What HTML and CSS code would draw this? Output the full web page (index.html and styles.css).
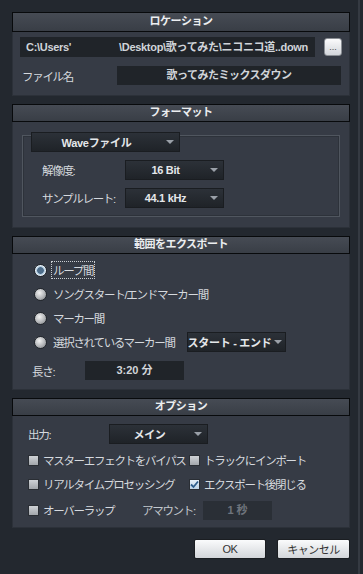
FILE: index.html
```html
<!DOCTYPE html>
<html lang="ja">
<head>
    <meta charset="utf-8" />
    <title>ミックスダウンをエクスポート</title>
    <link rel="stylesheet" href="styles.css">
</head>
<body>
<div class="dialog">

    <section class="group">
        <h3 class="group-head first">ロケーション</h3>
        <div class="group-body loc">
            <div class="row">
                <div class="field path"><span class="path-head">C:\Users'</span><span>\Desktop\歌ってみた\ニコニコ道..down</span></div>
                <button type="button" class="browse">...</button>
            </div>
            <div class="row">
                <span class="label name-label">ファイル名</span>
                <div class="field name">歌ってみたミックスダウン</div>
            </div>
        </div>
    </section>

    <section class="group">
        <h3 class="group-head">フォーマット</h3>
        <div class="group-body fmt">
            <div class="inner-box">
                <div class="drop wide"><span class="drop-text">Waveファイル</span><span class="arrow"></span></div>
                <div class="row fmt-row">
                    <span class="label fmt-label">解像度:</span>
                    <div class="drop"><span class="drop-text">16 Bit</span><span class="arrow"></span></div>
                </div>
                <div class="row fmt-row">
                    <span class="label fmt-label">サンプルレート:</span>
                    <div class="drop"><span class="drop-text">44.1 kHz</span><span class="arrow"></span></div>
                </div>
            </div>
        </div>
    </section>

    <section class="group">
        <h3 class="group-head">範囲をエクスポート</h3>
        <div class="group-body range">
            <div class="row radio-row"><span class="radio on"></span><span class="label focus">ループ間</span></div>
            <div class="row radio-row"><span class="radio"></span><span class="label">ソングスタート/エンドマーカー間</span></div>
            <div class="row radio-row"><span class="radio"></span><span class="label">マーカー間</span></div>
            <div class="row radio-row">
                <span class="radio"></span><span class="label">選択されているマーカー間</span>
                <div class="drop marker"><span class="drop-text">スタート - エンド</span><span class="arrow"></span></div>
            </div>
            <div class="row length-row">
                <span class="label length-label">長さ:</span>
                <div class="field value">3:20 分</div>
            </div>
        </div>
    </section>

    <section class="group">
        <h3 class="group-head">オプション</h3>
        <div class="group-body opts">
            <div class="row">
                <span class="label out-label">出力:</span>
                <div class="drop"><span class="drop-text">メイン</span><span class="arrow"></span></div>
            </div>
            <div class="row check-row">
                <div class="check-item col1"><span class="check"></span><span class="label">マスターエフェクトをバイパス</span></div>
                <div class="check-item"><span class="check"></span><span class="label">トラックにインポート</span></div>
            </div>
            <div class="row check-row">
                <div class="check-item col1"><span class="check"></span><span class="label">リアルタイムプロセッシング</span></div>
                <div class="check-item"><span class="check on"><svg width="9" height="9" viewBox="0 0 9 9"><path d="M1 4.5 L3.5 7 L8 1.5" fill="none" stroke="#2d5d8c" stroke-width="1.8"/></svg></span><span class="label">エクスポート後閉じる</span></div>
            </div>
            <div class="row check-row">
                <div class="check-item overlap"><span class="check"></span><span class="label">オーバーラップ</span></div>
                <span class="label amount-label">アマウント:</span>
                <div class="field amount">1 秒</div>
            </div>
        </div>
    </section>

    <div class="footer">
        <button type="button" class="btn">OK</button>
        <button type="button" class="btn">キャンセル</button>
    </div>

</div>
</body>
</html>
```

FILE: styles.css
```css
html,body{margin:0;background:#23282f}
body{font-family:"Liberation Sans","Noto Sans CJK JP",sans-serif;font-size:11px;color:#d5d9de}
.dialog{width:360px;height:574px;padding:12px 0 0 12px;box-sizing:border-box;border-right:2px solid #353a42}
.group{width:338px;margin-bottom:8px;background:#363b45;box-shadow:inset 1px 0 #2c3139,inset -1px 0 #2c3139,inset 0 -1px #2c3139}
.group-head{margin:0;height:16px;line-height:15px;border:1px solid #080a0c;background:linear-gradient(#464b54,#393e46);text-align:center;font-size:11px;font-weight:bold;color:#eceef0;letter-spacing:-0.5px}
.group-head.first{height:18px;line-height:17px}
.group-body{display:flex;flex-direction:column}
.row{display:flex;align-items:center}
.label{letter-spacing:-1.3px;white-space:nowrap;font-size:11.5px}

.field{height:20px;line-height:20px;background:#202429;box-sizing:border-box;font-weight:bold;color:#d0d4d9;white-space:nowrap;overflow:hidden}

/* location */
.loc{padding:5px 6px 11px 8px;gap:9px}
.path{width:295px;display:flex;padding-left:6px;letter-spacing:-0.3px}
.path-head{width:93px}
.browse{margin-left:9px;width:18px;height:18px;padding:0;border:1px solid #8a8e94;border-radius:3px;background:linear-gradient(#fbfbfc,#d2d5da);font-size:9px;color:#444;line-height:14px}
.name-label{width:97px;padding-left:2px;box-sizing:border-box}
.name{width:224px;text-align:center;height:19px;line-height:19px;letter-spacing:-0.5px}

/* dropdown */
.drop{width:99px;height:20px;display:flex;align-items:center;background:linear-gradient(#2c3138,#1f2328);border:1px solid #1a1d21;box-sizing:border-box;font-weight:bold;color:#e4e7ea}
.drop-text{flex:1;text-align:center;white-space:nowrap;letter-spacing:-0.3px}
.arrow{width:18px;display:flex;justify-content:center}
.arrow::before{content:"";border-left:4px solid transparent;border-right:4px solid transparent;border-top:4px solid #9aa0a8}

/* format */
.fmt{padding:13px 10px 11px 10px}
.inner-box{border:1px solid #50565f;box-shadow:inset 0 0 0 1px #2d323a;display:flex;flex-direction:column;padding-bottom:8px}
.drop.wide{width:149px;margin:-4px 0 0 8px}
.fmt-row{margin-top:8px}
.fmt-label{width:83px;padding-left:19px;box-sizing:content-box}

/* range */
.range{padding:6px 0 10px 22px;gap:4px}
.radio-row{height:20px}
.radio{width:11px;height:11px;border-radius:50%;border:1px solid #22262c;background:radial-gradient(circle at 40% 35%,#f2f2f2,#b3b5b8 55%,#75787c);margin-right:6px}
.radio.on{background:radial-gradient(circle,#4e6d8a 0 3px,#9fbcd3 3.5px,#e4eef6 5px)}
.focus{outline:1px dotted #c9cdd2;padding:0 1px;margin-left:-1px}
.marker{margin-left:12px}
.length-row{margin-top:5px;margin-left:-2px}
.length-label{width:53px}
.value{width:99px;height:19px;line-height:19px;text-align:center}

/* options */
.opts{padding:8px 0 8px 16px}
.out-label{width:81px}
.check-row{height:20px}
.opts .check-row:nth-child(2){margin-top:6px}
.opts .check-row:nth-child(3){margin-top:4px}
.opts .check-row:nth-child(4){margin-top:6px}
.check-item{display:flex;align-items:center;gap:4px}
.col1{width:161px}
.overlap{width:114px}
.check{width:11px;height:11px;border:1px solid #2a2e34;box-sizing:border-box;background:linear-gradient(#cfd2d6,#a2a6ab);display:flex;align-items:center;justify-content:center}
.check.on{background:linear-gradient(#e3eef7,#bcd3e6)}
.amount-label{width:61px;color:#c2c7cd}
.amount{width:69px;height:19px;line-height:19px;text-align:center;color:#6f757d;background:#2a2f36}

/* footer */
.footer{display:flex;justify-content:flex-end;gap:11px;padding-top:3px;width:338px}
.btn{width:72px;height:20px;padding:0;border:1px solid #1b1e22;border-radius:2px;background:linear-gradient(#fafbfc,#d3d6da);font-family:inherit;font-size:11px;color:#333;letter-spacing:-0.5px}
.btn + .btn{width:73px}
```
